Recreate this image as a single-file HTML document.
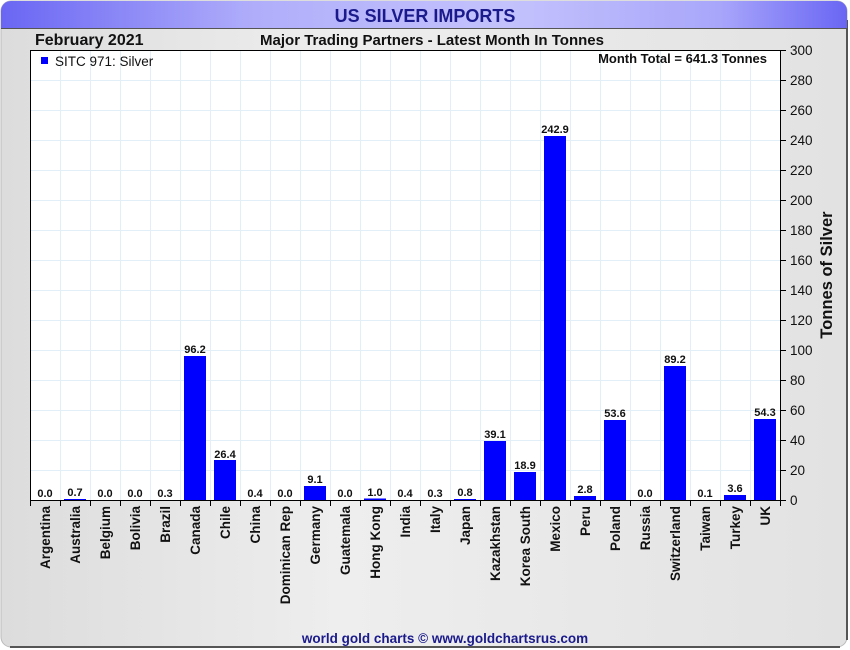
<!DOCTYPE html>
<html><head><meta charset="utf-8"><style>
html,body{margin:0;padding:0;background:#fff;}
svg{display:block;font-family:"Liberation Sans",Arial,sans-serif;}
</style></head><body>
<svg width="850" height="650" viewBox="0 0 850 650" xmlns="http://www.w3.org/2000/svg">
<defs>
<linearGradient id="tb" x1="0" x2="1" y1="0" y2="0">
<stop offset="0" stop-color="#6a66f4"/><stop offset="0.3" stop-color="#b0aefa"/><stop offset="0.6" stop-color="#c4c2fc"/><stop offset="0.85" stop-color="#a8a6fa"/><stop offset="1" stop-color="#6a66f4"/></linearGradient>
<linearGradient id="bg" x1="0" x2="1" y1="0" y2="0">
<stop offset="0" stop-color="#dcdcdc"/><stop offset="0.4" stop-color="#eeeeee"/><stop offset="1" stop-color="#e2e2e2"/></linearGradient>
</defs>
<rect x="0" y="0" width="850" height="650" fill="#fff"/>
<rect x="1" y="1" width="846" height="646" rx="10" fill="url(#bg)" stroke="#bbb"/>
<line x1="847" y1="20" x2="847" y2="640" stroke="#555" stroke-width="2"/>
<line x1="10" y1="647" x2="840" y2="647" stroke="#555" stroke-width="2"/>
<path d="M1 28 V11 A10 10 0 0 1 11 1 H837 A10 10 0 0 1 847 11 V28 Z" fill="url(#tb)"/>
<line x1="1" y1="28.5" x2="847" y2="28.5" stroke="#555"/>
<text x="425" y="22" text-anchor="middle" font-size="18" font-weight="bold" fill="#1a1a8c">US SILVER IMPORTS</text>
<text x="35" y="45" font-size="16" font-weight="bold" fill="#111">February 2021</text>
<text x="432" y="45" text-anchor="middle" font-size="15" font-weight="bold" fill="#111">Major Trading Partners - Latest Month In Tonnes</text>
<rect x="30" y="50" width="750" height="450" fill="#fff"/>
<g stroke="#e2eff8" stroke-width="1">
<path d="M60.5 50V500M90.5 50V500M120.5 50V500M150.5 50V500M180.5 50V500M210.5 50V500M240.5 50V500M270.5 50V500M300.5 50V500M330.5 50V500M360.5 50V500M390.5 50V500M420.5 50V500M450.5 50V500M480.5 50V500M510.5 50V500M540.5 50V500M570.5 50V500M600.5 50V500M630.5 50V500M660.5 50V500M690.5 50V500M720.5 50V500M750.5 50V500"/>
<path d="M30 80.5H780M30 110.5H780M30 140.5H780M30 170.5H780M30 200.5H780M30 230.5H780M30 260.5H780M30 290.5H780M30 320.5H780M30 350.5H780M30 380.5H780M30 410.5H780M30 440.5H780M30 470.5H780"/>
</g>
<rect x="30.5" y="50.5" width="750" height="450" fill="none" stroke="#000"/>
<rect x="41" y="57" width="7" height="7" fill="#0000ff"/>
<text x="55" y="66" font-size="13.5" fill="#111">SITC 971: Silver</text>
<text x="767" y="63" text-anchor="end" font-size="13" font-weight="bold" fill="#111">Month Total = 641.3 Tonnes</text>
<g fill="#0000ff">
<rect x="64" y="499" width="22" height="1"/>
<rect x="184" y="356" width="22" height="144"/>
<rect x="214" y="460" width="22" height="40"/>
<rect x="304" y="486" width="22" height="14"/>
<rect x="364" y="498.5" width="22" height="1.5"/>
<rect x="454" y="499" width="22" height="1"/>
<rect x="484" y="441" width="22" height="59"/>
<rect x="514" y="472" width="22" height="28"/>
<rect x="544" y="136" width="22" height="364"/>
<rect x="574" y="496" width="22" height="4"/>
<rect x="604" y="420" width="22" height="80"/>
<rect x="664" y="366" width="22" height="134"/>
<rect x="724" y="495" width="22" height="5"/>
<rect x="754" y="419" width="22" height="81"/>
</g>
<g font-size="11" font-weight="bold" fill="#111" text-anchor="middle">
<text x="45" y="497">0.0</text><text x="75" y="496">0.7</text><text x="105" y="497">0.0</text><text x="135" y="497">0.0</text><text x="165" y="497">0.3</text>
<text x="195" y="353">96.2</text><text x="225" y="458">26.4</text><text x="255" y="497">0.4</text><text x="285" y="497">0.0</text><text x="315" y="483">9.1</text>
<text x="345" y="497">0.0</text><text x="375" y="496">1.0</text><text x="405" y="497">0.4</text><text x="435" y="497">0.3</text><text x="465" y="496">0.8</text>
<text x="495" y="438">39.1</text><text x="525" y="469">18.9</text><text x="555" y="133">242.9</text><text x="585" y="493">2.8</text><text x="615" y="417">53.6</text>
<text x="645" y="497">0.0</text><text x="675" y="363">89.2</text><text x="705" y="497">0.1</text><text x="735" y="492">3.6</text><text x="765" y="416">54.3</text>
</g>
<path d="M30.5 500V506M60.5 500V506M90.5 500V506M120.5 500V506M150.5 500V506M180.5 500V506M210.5 500V506M240.5 500V506M270.5 500V506M300.5 500V506M330.5 500V506M360.5 500V506M390.5 500V506M420.5 500V506M450.5 500V506M480.5 500V506M510.5 500V506M540.5 500V506M570.5 500V506M600.5 500V506M630.5 500V506M660.5 500V506M690.5 500V506M720.5 500V506M750.5 500V506M780.5 500V506" stroke="#000"/>
<g font-size="13.5" font-weight="bold" fill="#111" text-anchor="end">
<text transform="translate(50,506) rotate(-90)">Argentina</text>
<text transform="translate(80,506) rotate(-90)">Australia</text>
<text transform="translate(110,506) rotate(-90)">Belgium</text>
<text transform="translate(140,506) rotate(-90)">Bolivia</text>
<text transform="translate(170,506) rotate(-90)">Brazil</text>
<text transform="translate(200,506) rotate(-90)">Canada</text>
<text transform="translate(230,506) rotate(-90)">Chile</text>
<text transform="translate(260,506) rotate(-90)">China</text>
<text transform="translate(290,506) rotate(-90)">Dominican Rep</text>
<text transform="translate(320,506) rotate(-90)">Germany</text>
<text transform="translate(350,506) rotate(-90)">Guatemala</text>
<text transform="translate(380,506) rotate(-90)">Hong Kong</text>
<text transform="translate(410,506) rotate(-90)">India</text>
<text transform="translate(440,506) rotate(-90)">Italy</text>
<text transform="translate(470,506) rotate(-90)">Japan</text>
<text transform="translate(500,506) rotate(-90)">Kazakhstan</text>
<text transform="translate(530,506) rotate(-90)">Korea South</text>
<text transform="translate(560,506) rotate(-90)">Mexico</text>
<text transform="translate(590,506) rotate(-90)">Peru</text>
<text transform="translate(620,506) rotate(-90)">Poland</text>
<text transform="translate(650,506) rotate(-90)">Russia</text>
<text transform="translate(680,506) rotate(-90)">Switzerland</text>
<text transform="translate(710,506) rotate(-90)">Taiwan</text>
<text transform="translate(740,506) rotate(-90)">Turkey</text>
<text transform="translate(770,506) rotate(-90)">UK</text>
</g>
<path d="M780 50.5H786M780 80.5H786M780 110.5H786M780 140.5H786M780 170.5H786M780 200.5H786M780 230.5H786M780 260.5H786M780 290.5H786M780 320.5H786M780 350.5H786M780 380.5H786M780 410.5H786M780 440.5H786M780 470.5H786M780 500.5H786" stroke="#000"/>
<g font-size="13.5" fill="#111">
<text x="790" y="55">300</text><text x="790" y="85">280</text><text x="790" y="115">260</text><text x="790" y="145">240</text><text x="790" y="175">220</text><text x="790" y="205">200</text><text x="790" y="235">180</text><text x="790" y="265">160</text><text x="790" y="295">140</text><text x="790" y="325">120</text><text x="790" y="355">100</text><text x="790" y="385">80</text><text x="790" y="415">60</text><text x="790" y="445">40</text><text x="790" y="475">20</text><text x="790" y="505">0</text>
</g>
<text transform="translate(832,275) rotate(-90)" text-anchor="middle" font-size="16.5" font-weight="bold" fill="#111">Tonnes of Silver</text>
<text x="445" y="643" text-anchor="middle" font-size="13.5" font-weight="bold" fill="#1a1a8c">world gold charts © www.goldchartsrus.com</text>
</svg>
</body></html>
